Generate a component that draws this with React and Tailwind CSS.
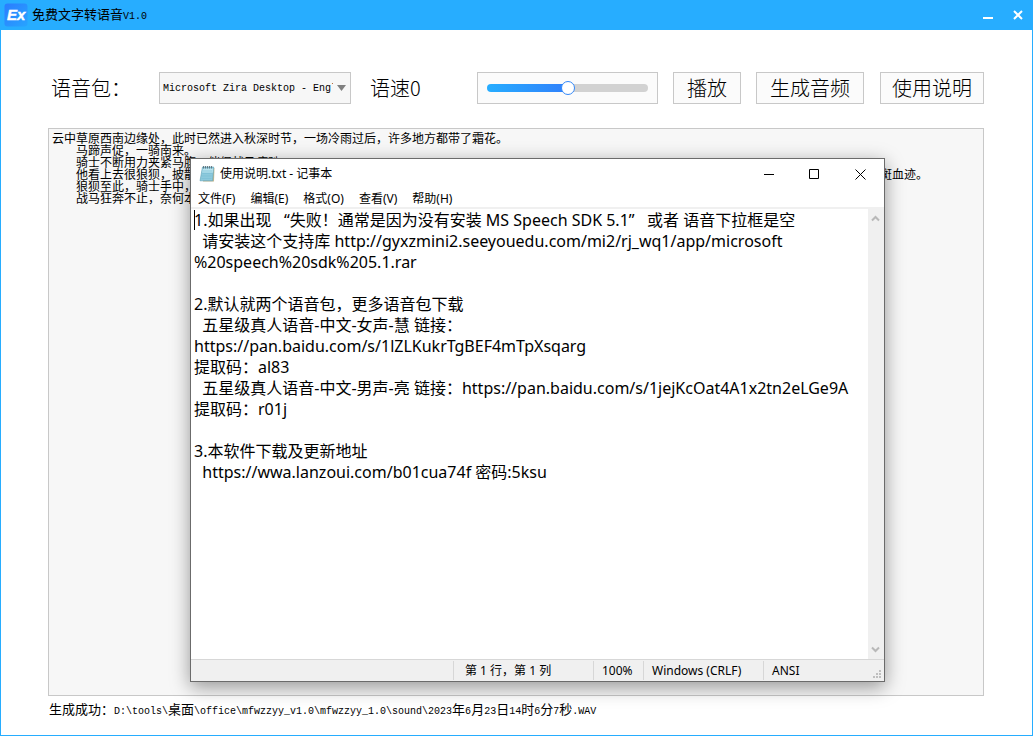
import { useState } from "react";

const VOICES = ["Microsoft Zira Desktop - English (United States)"];

const STORY = [
  "云中草原西南边缘处，此时已然进入秋深时节，一场冷雨过后，许多地方都带了霜花。",
  "　　马蹄声促，一骑南来。",
  "　　骑士不断用力夹紧马腹，催促战马疾驰。",
  "　　他看上去很狼狈，披散" + "　".repeat(57) + "斑血迹。",
  "　　狼狈至此，骑士手中，",
  "　　战马狂奔不止，奈何本",
].join("\n");

const README = [
  "1.如果出现   “失败！通常是因为没有安装 MS Speech SDK 5.1”   或者 语音下拉框是空",
  "  请安装这个支持库 http://gyxzmini2.seeyouedu.com/mi2/rj_wq1/app/microsoft",
  "%20speech%20sdk%205.1.rar",
  "",
  "2.默认就两个语音包，更多语音包下载",
  "  五星级真人语音-中文-女声-慧 链接：",
  "https://pan.baidu.com/s/1lZLKukrTgBEF4mTpXsqarg",
  "提取码：al83",
  "  五星级真人语音-中文-男声-亮 链接：https://pan.baidu.com/s/1jejKcOat4A1x2tn2eLGe9A",
  "提取码：r01j",
  "",
  "3.本软件下载及更新地址",
  "  https://wwa.lanzoui.com/b01cua74f 密码:5ksu",
].join("\n");

const MENUS = ["文件(F)", "编辑(E)", "格式(O)", "查看(V)", "帮助(H)"];

// Half-width letters are set smaller so they stay about half a Chinese character wide
const MonoText = ({ text }) =>
  text.split(/([\x20-\x7e]+)/).map((part, i) =>
    /^[\x20-\x7e]/.test(part) ? (
      <span key={i} className="text-[10px]">
        {part}
      </span>
    ) : (
      part
    )
  );

const AppLogo = () => (
  <svg width="24" height="24" viewBox="0 0 24 24" aria-hidden="true">
    <defs>
      <linearGradient id="logo-bg" x1="0" y1="0" x2="1" y2="1">
        <stop offset="0" stopColor="#2b7cff" />
        <stop offset="1" stopColor="#27a4ff" />
      </linearGradient>
    </defs>
    <rect x="0.5" y="0.5" width="23" height="23" rx="3" fill="url(#logo-bg)" />
    <text
      x="3"
      y="17"
      fill="#fff"
      stroke="#fff"
      strokeWidth="0.400"
      fontFamily="Liberation Sans, sans-serif"
      fontSize="15"
      fontWeight="bold"
      fontStyle="italic"
    >
      Ex
    </text>
  </svg>
);

const NotepadIcon = () => (
  <svg width="16" height="18" viewBox="0 0 16 18" aria-hidden="true">
    <path d="M4 3h11.500l-.500 13.500H4z" fill="#c9b98f" />
    <path d="M3.500 2h11.200l-1 13.800H1z" fill="#8cc9dc" stroke="#5a9fb5" strokeWidth="0.600" />
    <path d="M3.800 3.600h10.500l-.300 4H3.200z" fill="#b9e3ee" />
    <path
      d="M3.500 6h10M3.200 8.500h10M2.800 11h10M2.400 13.500h10"
      stroke="#7dbfd4"
      strokeWidth="0.700"
    />
    <path
      d="M4.500 1v2.500M6.500 1v2.500M8.500 1v2.500M10.500 1v2.500M12.500 1v2.500"
      stroke="#5d6f78"
      strokeWidth="0.900"
    />
  </svg>
);

const ToolButton = ({ children, className }) => (
  <button
    className={`h-8 shrink-0 border border-[#c8c8c8] bg-[#fbfbfb] text-[20px] leading-6 font-light hover:bg-gray-100 ${className}`}
  >
    {children}
  </button>
);

const SpeedSlider = ({ value, onChange }) => {
  const percent = ((value + 10) / 20) * 100;

  return (
    <div className="flex h-8 min-w-0 flex-1 items-center border border-[#c8c8c8] bg-[#fbfbfb] px-[9px]">
      <input
        id="speed"
        type="range"
        min="-10"
        max="10"
        value={value}
        onChange={(e) => onChange(Number(e.target.value))}
        className="h-2 w-full appearance-none rounded-full [&::-webkit-slider-thumb]:h-[14px] [&::-webkit-slider-thumb]:w-[14px] [&::-webkit-slider-thumb]:appearance-none [&::-webkit-slider-thumb]:rounded-full [&::-webkit-slider-thumb]:border [&::-webkit-slider-thumb]:border-[#3388f8] [&::-webkit-slider-thumb]:bg-white"
        style={{
          background: `linear-gradient(to right, #27adff, #3080fb ${percent}%, #d2d2d2 ${percent}%)`,
        }}
      />
    </div>
  );
};

const NotepadWindow = () => {
  const [text, setText] = useState(README);

  return (
    <section className="absolute top-[158px] right-[149px] bottom-[55px] left-[190px] flex flex-col border border-[#6b6b6b] bg-white font-['Noto_Sans','Noto_Sans_CJK_SC',sans-serif] text-[12px] shadow-[0_5px_18px_rgba(0,0,0,0.4)]">
      {/* Title bar */}
      <header className="flex h-[30px] shrink-0 items-center pl-2">
        <NotepadIcon />
        <h2 className="ml-[5px] flex-1">使用说明.txt - 记事本</h2>
        <button aria-label="最小化" className="flex h-full w-[45px] items-center justify-center">
          <svg width="11" height="11" stroke="#000" fill="none">
            <path d="M0 5.500h10" />
          </svg>
        </button>
        <button aria-label="最大化" className="flex h-full w-[45px] items-center justify-center">
          <svg width="11" height="11" stroke="#000" fill="none">
            <path d="M.5.5h9v9h-9z" />
          </svg>
        </button>
        <button aria-label="关闭" className="flex h-full w-[47px] items-center justify-center">
          <svg width="11" height="11" stroke="#000" fill="none">
            <path d="M.5.5l10 10M10.500.5l-10 10" />
          </svg>
        </button>
      </header>

      {/* Menu */}
      <nav className="flex h-5 shrink-0 items-center gap-[15px] border-b-2 border-[#f0f0f0] pt-[2px] pl-[7px]">
        {MENUS.map((menu) => (
          <button key={menu}>{menu}</button>
        ))}
      </nav>

      {/* Editor */}
      <div className="relative flex min-h-0 flex-1">
        <textarea
          aria-label="使用说明"
          value={text}
          onChange={(e) => setText(e.target.value)}
          spellCheck={false}
          className="min-w-0 flex-1 resize-none overflow-hidden pt-px pl-[3px] text-[16px] leading-[21px] whitespace-pre outline-none"
        />
        <span className="absolute top-px left-[3px] h-5 w-px bg-black" />
        <div className="flex w-4 flex-col items-center justify-between bg-[#f0f0f0] py-[6px] pr-[2px]">
          <svg width="9" height="7" fill="none" stroke="#b8b8b8" strokeWidth="2">
            <path d="M1 5.500l3.500-3.500l3.500 3.500" />
          </svg>
          <svg width="9" height="7" fill="none" stroke="#b8b8b8" strokeWidth="2">
            <path d="M1 1.500l3.500 3.500l3.500-3.500" />
          </svg>
        </div>
      </div>

      {/* Status bar */}
      <footer className="flex h-[22px] shrink-0 items-stretch border-t border-[#d7d7d7] bg-[#f0f0f0] leading-5">
        <span className="flex-1" />
        <span className="my-px w-[140px] border-l border-[#d7d7d7] pl-[11px]">
          第 1 行，第 1 列
        </span>
        <span className="my-px w-[50px] border-l border-[#d7d7d7] pl-2">100%</span>
        <span className="my-px w-[120px] border-l border-[#d7d7d7] pl-2">Windows (CRLF)</span>
        <span className="my-px flex w-[121px] items-start justify-between border-l border-[#d7d7d7] pl-2">
          ANSI
          <svg width="11" height="10" fill="#bfbfbf" className="self-end">
            <path d="M6 0h2v2h-2zM3 3h2v2h-2zM6 3h2v2h-2zM0 6h2v2h-2zM3 6h2v2h-2zM6 6h2v2h-2z" />
          </svg>
        </span>
      </footer>
    </section>
  );
};

const App = () => {
  const [voice, setVoice] = useState(VOICES[0]);
  const [speed, setSpeed] = useState(0);
  const [story, setStory] = useState(STORY);

  return (
    <div className="relative flex h-screen flex-col bg-white pr-px pb-px font-['Liberation_Mono','Noto_Sans_CJK_SC',monospace] text-[12px] text-black">
      <main className="flex min-h-0 flex-1 flex-col border border-t-0 border-[#27adff]">
        <header className="flex h-[30px] shrink-0 items-center bg-[#27adff] pl-[3px]">
          <AppLogo />
          <h1 className="ml-1 flex-1 pt-[2px] text-[13px]">
            <MonoText text="免费文字转语音V1.0" />
          </h1>
          <button aria-label="最小化" className="flex h-full w-[30px] items-center justify-center">
            <svg width="10" height="10" stroke="#fff" strokeWidth="2">
              <path d="M0 8h10" />
            </svg>
          </button>
          <button aria-label="关闭" className="flex h-full w-[29px] items-center justify-center">
            <svg width="10" height="10" stroke="#fff" strokeWidth="2">
              <path d="M1 1l8 8M9 1l-8 8" />
            </svg>
          </button>
        </header>

        <div className="flex min-h-0 flex-1 flex-col pt-[42px] pr-12 pl-[47px]">
          {/* Toolbar */}
          <div className="flex shrink-0 items-center font-['Noto_Sans_CJK_SC',sans-serif]">
            <label
              htmlFor="voice"
              className="w-[111px] shrink-0 pl-[3px] text-[20px] leading-6 font-light"
            >
              语音包：
            </label>
            <div className="relative shrink-0">
              <select
                id="voice"
                value={voice}
                onChange={(e) => setVoice(e.target.value)}
                className="block h-8 w-48 appearance-none border border-[#c8c8c8] bg-[#f7f7f7] pr-[17px] pl-[3px] font-['Liberation_Mono',monospace] text-[10px]"
              >
                {VOICES.map((name) => (
                  <option key={name}>{name}</option>
                ))}
              </select>
              <svg
                width="9"
                height="6"
                className="pointer-events-none absolute top-[13px] right-[5px]"
                fill="#808080"
              >
                <path d="M0 0h9l-4.500 6z" />
              </svg>
            </div>
            <label
              htmlFor="speed"
              className="ml-[19px] w-[107px] shrink-0 text-[20px] leading-6 font-light"
            >
              语速{speed}
            </label>
            <SpeedSlider value={speed} onChange={setSpeed} />
            <ToolButton className="ml-[15px] px-[13px]">播放</ToolButton>
            <ToolButton className="ml-[15px] px-[13px]">生成音频</ToolButton>
            <ToolButton className="ml-4 px-[11px]">使用说明</ToolButton>
          </div>

          <textarea
            aria-label="文字内容"
            value={story}
            onChange={(e) => setStory(e.target.value)}
            spellCheck={false}
            className="mt-6 min-h-0 flex-1 resize-none overflow-hidden border border-[#c8c8c8] bg-[#f7f7f7] px-[3px] py-[5px] leading-3 whitespace-pre outline-none"
          />

          <p className="h-[39px] shrink-0 pt-[5px] pl-px text-[13px] leading-5">
            <MonoText text="生成成功：D:\tools\桌面\office\mfwzzyy_v1.0\mfwzzyy_1.0\sound\2023年6月23日14时6分7秒.WAV" />
          </p>
        </div>
      </main>

      <NotepadWindow />
    </div>
  );
};

export default App;
